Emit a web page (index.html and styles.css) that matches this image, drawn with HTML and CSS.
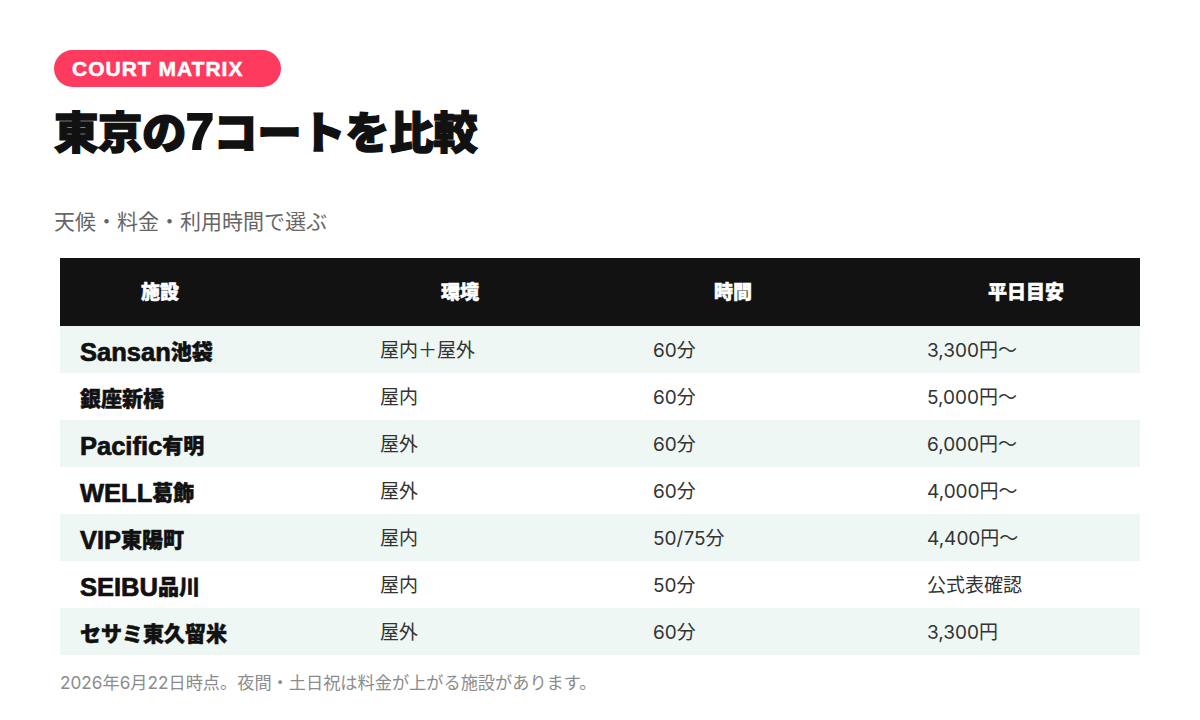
FILE: index.html
```html
<!DOCTYPE html>
<html lang="ja">
<head>
<meta charset="utf-8">
<title>Court Matrix</title>
<link rel="stylesheet" href="styles.css">
</head>
<body>
<main class="page">
  <div class="badge">COURT MATRIX</div>
  <h1 class="title">東京の<span class="digit">7</span>コートを比較</h1>
  <p class="subtitle">天候・料金・利用時間で選ぶ</p>
  <table class="matrix">
    <colgroup>
      <col class="c1"><col class="c2"><col class="c3"><col class="c4">
    </colgroup>
    <thead>
      <tr><th>施設</th><th>環境</th><th>時間</th><th>平日目安</th></tr>
    </thead>
    <tbody>
      <tr><td class="name"><span class="lat">Sansan</span>池袋</td><td>屋内＋屋外</td><td>60分</td><td>3,300円〜</td></tr>
      <tr><td class="name">銀座新橋</td><td>屋内</td><td>60分</td><td>5,000円〜</td></tr>
      <tr><td class="name"><span class="lat">Pacific</span>有明</td><td>屋外</td><td>60分</td><td>6,000円〜</td></tr>
      <tr><td class="name"><span class="lat">WELL</span>葛飾</td><td>屋外</td><td>60分</td><td>4,000円〜</td></tr>
      <tr><td class="name"><span class="lat">VIP</span>東陽町</td><td>屋内</td><td>50/75分</td><td>4,400円〜</td></tr>
      <tr><td class="name"><span class="lat">SEIBU</span>品川</td><td>屋内</td><td>50分</td><td>公式表確認</td></tr>
      <tr><td class="name">セサミ東久留米</td><td>屋外</td><td>60分</td><td>3,300円</td></tr>
    </tbody>
  </table>
  <p class="note">2026年6月22日時点。夜間・土日祝は料金が上がる施設があります。</p>
</main>
</body>
</html>
```

FILE: styles.css
```css
* { box-sizing: border-box; }
html, body { margin: 0; padding: 0; background: #ffffff; }
body {
  font-family: Inter, "Noto Sans CJK JP", sans-serif;
  color: #111111;
  width: 1200px;
  height: 720px;
  overflow: hidden;
}
.page {
  padding: 50px 54px 0 54px;
  display: flex;
  flex-direction: column;
  align-items: flex-start;
}
.badge {
  background: #ff3a5f;
  color: #ffffff;
  height: 37px;
  line-height: 37px;
  border-radius: 19px;
  padding: 0 38px 0 18px;
  font-family: "Liberation Sans", Arial, sans-serif;
  font-weight: 700;
  font-size: 21px;
  letter-spacing: 1px;
  -webkit-text-stroke: 0.5px #ffffff;
}
.title {
  margin: 16px 0 0 0;
  font-family: "Noto Sans CJK JP", sans-serif;
  font-weight: 900;
  font-size: 44.5px;
  line-height: 53px;
  color: #111111;
  letter-spacing: -0.5px;
  -webkit-text-stroke: 1.4px #111111;
}
.title .digit {
  font-family: "Liberation Sans", Arial, sans-serif;
  font-size: 50px;
  font-weight: 700;
  line-height: 0;
  -webkit-text-stroke: 2px #111111;
}
.subtitle {
  margin: 51px 0 0 0;
  font-family: Inter, "Noto Sans CJK JP", sans-serif;
  font-size: 21px;
  line-height: 30px;
  color: #666666;
}
.matrix {
  margin: 21px 0 0 6px;
  width: 1080px;
  border-collapse: collapse;
  table-layout: fixed;
}
.c1 { width: 300px; }
.c2 { width: 273px; }
.c3 { width: 274px; }
.c4 { width: 233px; }
.matrix th {
  background: #121212;
  color: #ffffff;
  height: 68px;
  padding: 0 0 4px 81px;
  text-align: left;
  font-family: "Noto Sans CJK JP", sans-serif;
  font-weight: 900;
  font-size: 19px;
  -webkit-text-stroke: 0.5px #ffffff;
}
.matrix td {
  height: 47px;
  padding: 3px 0 0 20px;
  font-size: 19px;
  line-height: 28px;
  color: #333333;
  font-weight: 400;
}
.matrix tbody tr:nth-child(odd) td { background: #eef7f4; }
.matrix td.name {
  font-family: "Noto Sans CJK JP", sans-serif;
  font-weight: 900;
  font-size: 21px;
  color: #111111;
  padding-top: 1px;
  -webkit-text-stroke: 0.5px #111111;
}
.matrix td.name .lat {
  font-family: "Liberation Sans", Arial, sans-serif;
  font-weight: 700;
  font-size: 25.5px;
  line-height: 0;
  vertical-align: -2px;
  -webkit-text-stroke: 0.7px #111111;
}
.note {
  margin: 16px 0 0 6px;
  font-size: 17.2px;
  line-height: 24px;
  color: #8c8c8c;
}
```
